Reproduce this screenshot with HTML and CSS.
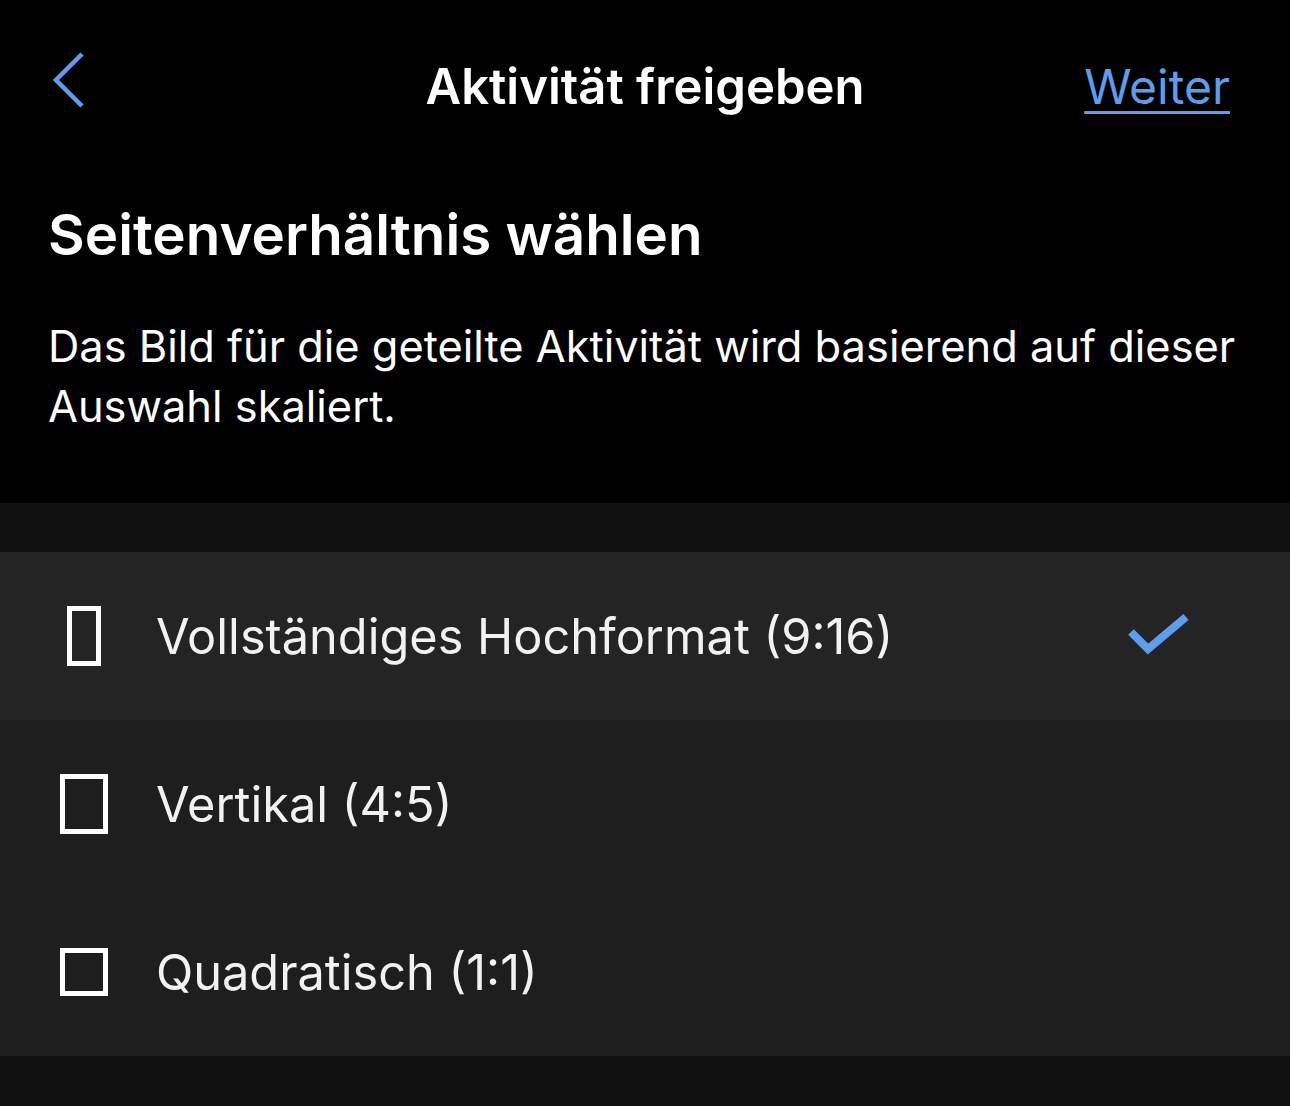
FILE: index.html
```html
<!DOCTYPE html>
<html lang="de">
<head>
<meta charset="utf-8">
<title>Aktivität freigeben</title>
<link rel="stylesheet" href="styles.css">
</head>
<body>
<div class="screen">
  <header class="nav">
    <button class="back" aria-label="Zurück">
      <svg width="36" height="56" viewBox="0 0 36 56"><path d="M32 2 L6 28 L32 54" fill="none" stroke="#5e9cec" stroke-width="4.5" stroke-linecap="butt" stroke-linejoin="miter"/></svg>
    </button>
    <h1 class="nav-title">Aktivität freigeben</h1>
    <a class="nav-next" href="#">Weiter</a>
  </header>
  <section class="intro">
    <h2 class="heading">Seitenverhältnis wählen</h2>
    <p class="desc">Das Bild für die geteilte Aktivität wird basierend auf dieser Auswahl skaliert.</p>
  </section>
  <div class="spacer"></div>
  <ul class="options">
    <li class="option selected">
      <span class="icon"><span class="frame frame-916"></span></span>
      <span class="label">Vollständiges Hochformat (9:16)</span>
      <svg class="check" width="62" height="46" viewBox="0 0 62 46"><path d="M3 19 L20 36 L58 4" fill="none" stroke="#5e9cec" stroke-width="8"/></svg>
    </li>
    <li class="option">
      <span class="icon"><span class="frame frame-45"></span></span>
      <span class="label">Vertikal (4:5)</span>
    </li>
    <li class="option">
      <span class="icon"><span class="frame frame-11"></span></span>
      <span class="label">Quadratisch (1:1)</span>
    </li>
  </ul>
  <div class="footer"></div>
</div>
</body>
</html>
```

FILE: styles.css
```css
* { box-sizing: border-box; }
html, body { margin: 0; padding: 0; background: #000; }
body {
  font-family: Inter, "Noto Sans", "Liberation Sans", sans-serif;
  color: #fff;
  width: 1290px;
  height: 1106px;
  overflow: hidden;
}
.screen { display: flex; flex-direction: column; height: 1106px; }
.nav {
  height: 172px;
  display: flex;
  align-items: center;
  justify-content: space-between;
  padding: 0 60px 0 50px;
  position: relative;
}
.back {
  background: none;
  border: 0;
  padding: 0;
  width: 40px;
  height: 56px;
  margin-bottom: 12px;
  display: flex;
  align-items: center;
  cursor: pointer;
}
.nav-title {
  margin: 0;
  font-size: 49px;
  font-weight: 600;
  letter-spacing: 0;
  position: absolute;
  left: 0;
  right: 0;
  text-align: center;
  pointer-events: none;
}
.nav-next {
  color: #5e9cec;
  font-size: 48px;
  font-weight: 400;
  text-decoration: underline;
  text-decoration-thickness: 3px;
  text-underline-offset: 7px;
}
.intro { padding: 29px 50px 0 48px; height: 331px; }
.heading {
  margin: 0;
  font-size: 56.5px;
  font-weight: 600;
  line-height: 68px;
}
.desc {
  margin: 47px 0 0 0;
  font-size: 43.4px;
  line-height: 60px;
  font-weight: 400;
}
.spacer { height: 49px; background: #111; }
.options { list-style: none; margin: 0; padding: 0; }
.option {
  height: 168px;
  background: #1e1e1e;
  display: flex;
  align-items: center;
  padding: 0 0 0 50px;
}
.option.selected { background: #242424; }
.icon {
  width: 68px;
  height: 68px;
  display: flex;
  align-items: center;
  justify-content: center;
  margin-right: 38px;
}
.frame { border: 5px solid #fff; display: block; }
.frame-916 { width: 34px; height: 60px; }
.frame-45 { width: 48px; height: 60px; }
.frame-11 { width: 48px; height: 48px; }
.label { font-size: 48.7px; color: #f2f2f2; flex: 1; }
.check { margin-right: 100px; }
.footer { flex: 1; background: #111; }
```
